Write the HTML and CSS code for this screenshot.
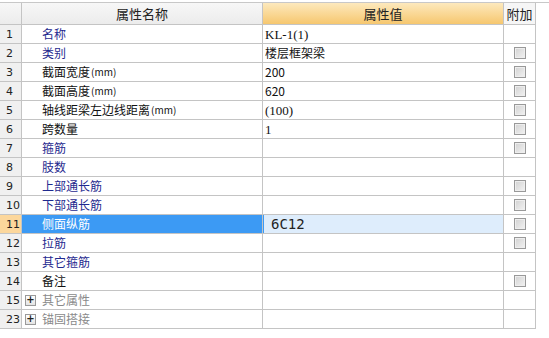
FILE: index.html
```html
<!DOCTYPE html>
<html lang="zh-CN">
<head>
    <meta charset="UTF-8">
    <title>属性编辑</title>
    <link rel="stylesheet" href="styles.css">
</head>
<body>
    <div class="prop-grid">
        <div class="row head">
            <div class="cell num"></div>
            <div class="cell name">属性名称</div>
            <div class="cell val">属性值</div>
            <div class="cell add">附加</div>
        </div>
        <div class="row">
            <div class="cell num">1</div>
            <div class="cell name blue">名称</div>
            <div class="cell val serif">KL-1(1)</div>
            <div class="cell add"></div>
        </div>
        <div class="row">
            <div class="cell num">2</div>
            <div class="cell name blue">类别</div>
            <div class="cell val">楼层框架梁</div>
            <div class="cell add"><span class="chk"></span></div>
        </div>
        <div class="row">
            <div class="cell num">3</div>
            <div class="cell name">截面宽度<small>(mm)</small></div>
            <div class="cell val">200</div>
            <div class="cell add"><span class="chk"></span></div>
        </div>
        <div class="row">
            <div class="cell num">4</div>
            <div class="cell name">截面高度<small>(mm)</small></div>
            <div class="cell val">620</div>
            <div class="cell add"><span class="chk"></span></div>
        </div>
        <div class="row">
            <div class="cell num">5</div>
            <div class="cell name">轴线距梁左边线距离<small>(mm)</small></div>
            <div class="cell val serif">(100)</div>
            <div class="cell add"><span class="chk"></span></div>
        </div>
        <div class="row">
            <div class="cell num">6</div>
            <div class="cell name">跨数量</div>
            <div class="cell val serif">1</div>
            <div class="cell add"><span class="chk"></span></div>
        </div>
        <div class="row">
            <div class="cell num">7</div>
            <div class="cell name blue">箍筋</div>
            <div class="cell val"></div>
            <div class="cell add"><span class="chk"></span></div>
        </div>
        <div class="row">
            <div class="cell num">8</div>
            <div class="cell name blue">肢数</div>
            <div class="cell val"></div>
            <div class="cell add"></div>
        </div>
        <div class="row">
            <div class="cell num">9</div>
            <div class="cell name blue">上部通长筋</div>
            <div class="cell val"></div>
            <div class="cell add"><span class="chk"></span></div>
        </div>
        <div class="row">
            <div class="cell num">10</div>
            <div class="cell name blue">下部通长筋</div>
            <div class="cell val"></div>
            <div class="cell add"><span class="chk"></span></div>
        </div>
        <div class="row selected">
            <div class="cell num">11</div>
            <div class="cell name">侧面纵筋</div>
            <div class="cell val">6C12</div>
            <div class="cell add"><span class="chk"></span></div>
        </div>
        <div class="row">
            <div class="cell num">12</div>
            <div class="cell name blue">拉筋</div>
            <div class="cell val"></div>
            <div class="cell add"><span class="chk"></span></div>
        </div>
        <div class="row">
            <div class="cell num">13</div>
            <div class="cell name blue">其它箍筋</div>
            <div class="cell val"></div>
            <div class="cell add"></div>
        </div>
        <div class="row">
            <div class="cell num">14</div>
            <div class="cell name">备注</div>
            <div class="cell val"></div>
            <div class="cell add"><span class="chk"></span></div>
        </div>
        <div class="row group">
            <div class="cell num">15</div>
            <div class="cell name"><span class="plus">+</span>其它属性</div>
            <div class="cell val"></div>
            <div class="cell add"></div>
        </div>
        <div class="row group">
            <div class="cell num">23</div>
            <div class="cell name"><span class="plus">+</span>锚固搭接</div>
            <div class="cell val"></div>
            <div class="cell add"></div>
        </div>
    </div>
</body>
</html>
```

FILE: styles.css
```css
* {
    margin: 0;
    padding: 0;
    box-sizing: border-box;
}

body {
    background: #ffffff;
    font-family: "Noto Sans CJK SC", "Liberation Sans", sans-serif;
    font-size: 12px;
    color: #111;
}

.prop-grid {
    margin-top: 2px;
    border-top: 1px solid #c8c8c8;
}

.row {
    display: grid;
    grid-template-columns: 21px 240px 240px 31px;
    grid-auto-rows: 18px;
    column-gap: 1px;
    width: max-content;
    background: #c4c4c4;
    padding: 0 1px 1px 0;
}

.row.head {
    grid-auto-rows: 21px;
}

.cell {
    background: #ffffff;
    display: flex;
    align-items: center;
    white-space: nowrap;
    overflow: hidden;
    line-height: 1;
}

.cell small {
    font-size: 10px;
    margin-left: 1px;
}

.num {
    background: #f0f0f0;
    padding-left: 6px;
    font-family: "DejaVu Sans", sans-serif;
    font-size: 11px;
    color: #222;
}

.name {
    padding-left: 20px;
}

.val {
    padding-left: 2px;
}

.val.serif {
    font-family: "Liberation Serif", "Noto Sans CJK SC", serif;
    font-size: 13px;
}

.add {
    justify-content: center;
}

.head .cell {
    justify-content: center;
    padding: 0;
    font-size: 13px;
    color: #222;
    background: linear-gradient(#f7f7f7, #ececec);
}

.head .val {
    background: linear-gradient(#fde9bd, #f6c76f);
}

.head .add {
    background: #f6f6f6;
}

.blue {
    color: #1f2a8f;
}

.chk {
    width: 12px;
    height: 12px;
    border: 1px solid #999999;
    background: linear-gradient(135deg, #d2d2d2, #f2f2f2);
    box-shadow: inset 0 0 0 1px #eeeeee;
}

.selected .num {
    background: #fcd79c;
}

.selected .name {
    background: #3c9af4;
    color: #ffffff;
}

.selected .val {
    background: #deedfc;
    padding-left: 8px;
    font-family: "DejaVu Sans Mono", monospace;
    font-size: 14px;
    color: #222;
    box-shadow: inset 1px 0 0 #3c9af4;
}

.group .name {
    padding-left: 3px;
    color: #8a8a8a;
}

.plus {
    width: 11px;
    height: 11px;
    margin-right: 6px;
    border: 1px solid #9a9a9a;
    background: linear-gradient(#ffffff, #e4e4e4);
    color: #222;
    font-family: "DejaVu Sans", sans-serif;
    font-size: 10px;
    font-weight: bold;
    display: flex;
    align-items: center;
    justify-content: center;
}
```
